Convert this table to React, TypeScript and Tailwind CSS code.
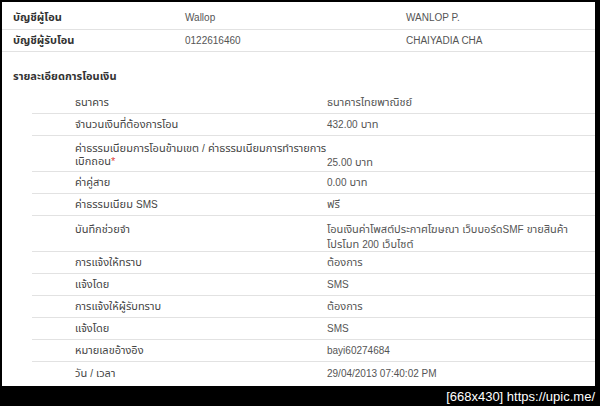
import React from "react";

const font = { fontFamily: '"Liberation Sans", Tahoma, "Noto Sans Thai", "Noto Sans", sans-serif' };

function L({ children }: { children: React.ReactNode }) {
  return <span className="text-[10px]">{children}</span>;
}

type Row = {
  label: React.ReactNode;
  value: React.ReactNode;
  kind?: "fee" | "memo" | "last";
};

const rows: Row[] = [
  { label: "ธนาคาร", value: "ธนาคารไทยพาณิชย์" },
  { label: "จำนวนเงินที่ต้องการโอน", value: <><L>432.00</L> บาท</> },
  {
    label: (
      <>
        ค่าธรรมเนียมการโอนข้ามเขต <L>/</L> ค่าธรรมเนียมการทำรายการ
        <br />
        เบิกถอน<span className="text-[#e0403a]">*</span>
      </>
    ),
    value: <><L>25.00</L> บาท</>,
    kind: "fee",
  },
  { label: "ค่าคู่สาย", value: <><L>0.00</L> บาท</> },
  { label: <>ค่าธรรมเนียม <L>SMS</L></>, value: "ฟรี" },
  {
    label: "บันทึกช่วยจำ",
    value: (
      <>
        โอนเงินค่าโพสต์ประกาศโฆษณา เว็บบอร์ด<L>SMF</L> ขายสินค้า
        <br />
        โปรโมท <L>200</L> เว็บไซต์
      </>
    ),
    kind: "memo",
  },
  { label: "การแจ้งให้ทราบ", value: "ต้องการ" },
  { label: "แจ้งโดย", value: <L>SMS</L> },
  { label: "การแจ้งให้ผู้รับทราบ", value: "ต้องการ" },
  { label: "แจ้งโดย", value: <L>SMS</L> },
  { label: "หมายเลขอ้างอิง", value: <L>bayi60274684</L> },
  { label: <>วัน <L>/</L> เวลา</>, value: <L>29/04/2013 07:40:02 PM</L>, kind: "last" },
];

function DetailRow({ r }: { r: Row }) {
  if (r.kind === "fee") {
    return (
      <div className="flex h-[36px] border-b border-[#e2e2e2]">
        <div className="w-[295px] shrink-0 pl-[43px] pt-[6px] leading-[13px] text-[#444] whitespace-nowrap">
          {r.label}
        </div>
        <div className="self-end pb-[2px] leading-[13px] text-[#555]">{r.value}</div>
      </div>
    );
  }
  if (r.kind === "memo") {
    return (
      <div className="flex h-[36px] border-b border-[#e2e2e2]">
        <div className="w-[295px] shrink-0 pl-[43px] pt-[6px] leading-[14px] text-[#444]">{r.label}</div>
        <div className="pt-[6px] leading-[14px] text-[#555] whitespace-nowrap">{r.value}</div>
      </div>
    );
  }
  return (
    <div
      className={
        r.kind === "last"
          ? "flex h-[22px] items-center"
          : "flex h-[22px] items-center border-b border-[#e2e2e2]"
      }
    >
      <div className="w-[295px] shrink-0 pl-[43px] text-[#444]">{r.label}</div>
      <div className="text-[#555]">{r.value}</div>
    </div>
  );
}

export default function App() {
  return (
    <div className="w-[600px] h-[406px] bg-black flex flex-col overflow-hidden" style={font}>
      <div className="mt-[2px] ml-[2px] w-[593px] h-[384px] bg-white overflow-hidden text-[11px]">
        <div className="flex h-[28px] border-b border-[#e2e2e2] pt-[8px] leading-[14px]">
          <div className="w-[183px] pl-[11px] font-bold text-[#333]">บัญชีผู้โอน</div>
          <div className="w-[221px] text-[#555]"><L>Wallop</L></div>
          <div className="text-[#555]"><L>WANLOP P.</L></div>
        </div>
        <div className="flex h-[22px] items-center border-b border-[#e2e2e2]">
          <div className="w-[183px] pl-[11px] font-bold text-[#333]">บัญชีผู้รับโอน</div>
          <div className="w-[221px] text-[#555]"><L>0122616460</L></div>
          <div className="text-[#555]"><L>CHAIYADIA CHA</L></div>
        </div>
        <div className="mt-[13px] h-[22px] flex items-center pl-[11px] font-bold text-[#333]">
          รายละเอียดการโอนเงิน
        </div>
        <div className="mt-[5px] ml-[30px]">
          {rows.map((r, i) => (
            <DetailRow key={i} r={r} />
          ))}
        </div>
      </div>
      <div className="flex-1 flex items-center justify-end pr-[5px]">
        <span className="text-white text-[13px] leading-none">[668x430] https://upic.me/</span>
      </div>
    </div>
  );
}
